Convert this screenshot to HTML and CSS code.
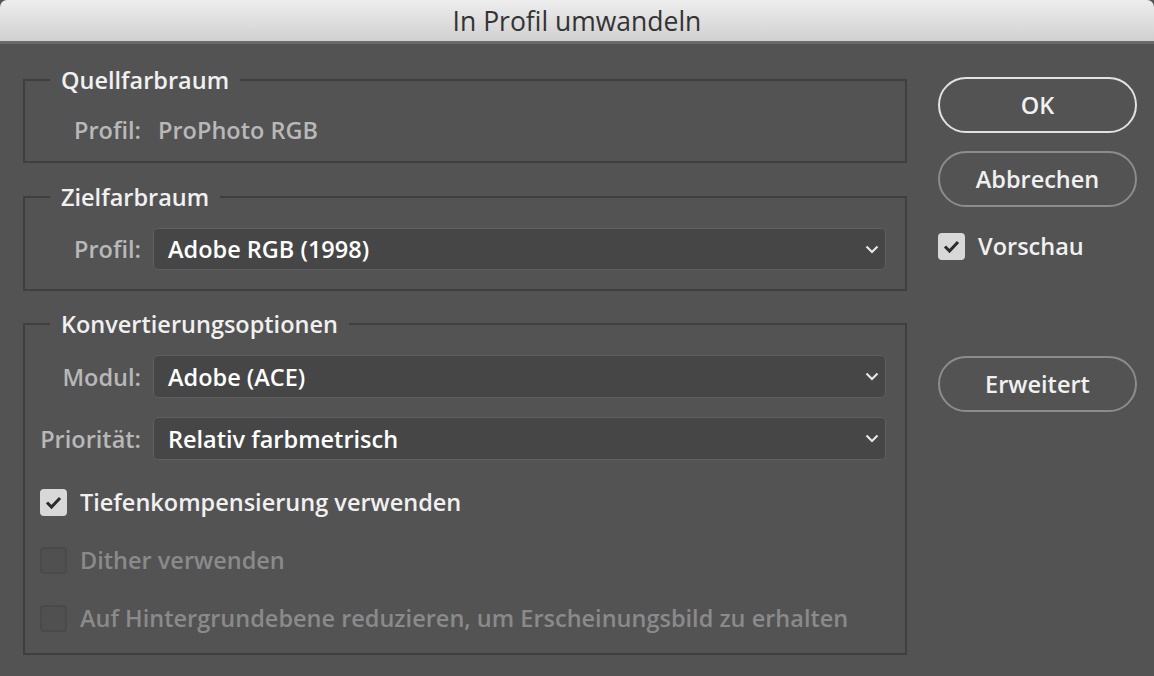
FILE: index.html
```html
<!DOCTYPE html>
<html lang="de">
<head>
  <meta charset="UTF-8" />
  <title>In Profil umwandeln</title>
  <link rel="stylesheet" href="styles.css">
</head>
<body>

  <div class="window">
    <div class="titlebar">In Profil umwandeln</div>

    <div class="content">
      <div class="left-col">

        <fieldset class="group group-source">
          <legend>Quellfarbraum</legend>
          <div class="row">
            <span class="label">Profil:</span>
            <span class="static-value">ProPhoto RGB</span>
          </div>
        </fieldset>

        <fieldset class="group group-target">
          <legend>Zielfarbraum</legend>
          <div class="row">
            <span class="label">Profil:</span>
            <div class="select">
              <span>Adobe RGB (1998)</span>
              <svg class="chevron" width="14" height="9" viewBox="0 0 14 9"><path d="M1.5 1.5 L7 7 L12.5 1.5" fill="none" stroke="#e6e6e6" stroke-width="2.2"/></svg>
            </div>
          </div>
        </fieldset>

        <fieldset class="group group-options">
          <legend>Konvertierungsoptionen</legend>
          <div class="row">
            <span class="label">Modul:</span>
            <div class="select">
              <span>Adobe (ACE)</span>
              <svg class="chevron" width="14" height="9" viewBox="0 0 14 9"><path d="M1.5 1.5 L7 7 L12.5 1.5" fill="none" stroke="#e6e6e6" stroke-width="2.2"/></svg>
            </div>
          </div>
          <div class="row row-gap">
            <span class="label">Priorität:</span>
            <div class="select">
              <span>Relativ farbmetrisch</span>
              <svg class="chevron" width="14" height="9" viewBox="0 0 14 9"><path d="M1.5 1.5 L7 7 L12.5 1.5" fill="none" stroke="#e6e6e6" stroke-width="2.2"/></svg>
            </div>
          </div>

          <div class="check first-check">
            <span class="box checked">
              <svg width="27" height="27" viewBox="0 0 27 27"><path d="M7 13.5 L11.5 18 L20 9" fill="none" stroke="#2b2b2b" stroke-width="3"/></svg>
            </span>
            <span class="check-label">Tiefenkompensierung verwenden</span>
          </div>
          <div class="check disabled">
            <span class="box"></span>
            <span class="check-label">Dither verwenden</span>
          </div>
          <div class="check disabled">
            <span class="box"></span>
            <span class="check-label">Auf Hintergrundebene reduzieren, um Erscheinungsbild zu erhalten</span>
          </div>
        </fieldset>

      </div>

      <div class="right-col">
        <button class="btn btn-default">OK</button>
        <button class="btn">Abbrechen</button>
        <div class="check preview-check">
          <span class="box checked">
            <svg width="27" height="27" viewBox="0 0 27 27"><path d="M7 13.5 L11.5 18 L20 9" fill="none" stroke="#2b2b2b" stroke-width="3"/></svg>
          </span>
          <span class="check-label">Vorschau</span>
        </div>
        <button class="btn btn-advanced">Erweitert</button>
      </div>
    </div>
  </div>

</body>
</html>
```

FILE: styles.css
```css
* {
  box-sizing: border-box;
  margin: 0;
  padding: 0;
}

html, body {
  background: #535353;
}

body {
  font-family: 'Open Sans', 'Noto Sans', sans-serif;
  font-weight: 600;
  width: 1154px;
  height: 676px;
  overflow: hidden;
}

.window {
  height: 676px;
}

.titlebar {
  height: 44px;
  background: linear-gradient(#eeeeee, #d0d0d0);
  border-bottom: 3px solid #6a6a6a;
  border-radius: 7px 7px 0 0;
  text-align: center;
  font-size: 26.5px;
  font-weight: 400;
  line-height: 42px;
  color: #333333;
}

.content {
  display: flex;
  padding: 24px 17px 0 23px;
}

.left-col {
  width: 884px;
}

.right-col {
  width: 199px;
  margin-left: 31px;
  padding-top: 9px;
  display: flex;
  flex-direction: column;
}

/* groups */
.group {
  border: 2px solid #3f3f3f;
  padding: 0 19px 0 15px;
  min-width: 0;
}

.group legend {
  margin-left: 10px;
  padding: 0 11px;
  font-size: 23.5px;
  line-height: 24px;
  color: #f0f0f0;
}

.group-source {
  padding-top: 22px;
  padding-bottom: 15px;
}

.group-target {
  margin-top: 22px;
  padding-top: 19px;
  padding-bottom: 19px;
}

.group-options {
  margin-top: 21px;
  padding-top: 19px;
  padding-bottom: 20px;
}

.row {
  display: flex;
  align-items: center;
  min-height: 30px;
}

.row-gap {
  margin-top: 19px;
}

.label {
  width: 101px;
  text-align: right;
  font-size: 23.5px;
  color: #b8b8b8;
  flex-shrink: 0;
}

.static-value {
  margin-left: 17px;
  font-size: 23.5px;
  color: #b8b8b8;
}

.select {
  flex: 1;
  margin-left: 12px;
  height: 43px;
  display: flex;
  align-items: center;
  justify-content: space-between;
  padding: 0 6px 0 14px;
  background: #464646;
  border: 1px solid #5f5f5f;
  border-radius: 5px;
  font-size: 23.5px;
  color: #ffffff;
}

.group-target .select {
  height: 42px;
}

/* checkboxes */
.check {
  display: flex;
  align-items: center;
  height: 30px;
  margin-top: 28px;
}

.first-check {
  margin-top: 27px;
}

.box {
  width: 27px;
  height: 27px;
  border-radius: 4px;
  flex-shrink: 0;
  border: 2px solid #4a4a4a;
  background: #505050;
}

.box.checked {
  border: none;
  background: #d8d8d8;
}

.box svg {
  display: block;
}

.check-label {
  margin-left: 13px;
  font-size: 23.5px;
  color: #f0f0f0;
}

.check.disabled .check-label {
  color: #8a8a8a;
}

.preview-check {
  margin-top: 24px;
}

/* buttons */
.btn {
  height: 56px;
  border-radius: 28px;
  border: 2px solid #8c8c8c;
  background: transparent;
  font-family: inherit;
  font-weight: 600;
  font-size: 23.5px;
  color: #f0f0f0;
  margin-top: 18px;
}

.btn-default {
  margin-top: 0;
  border-color: #e2e2e2;
}

.btn-advanced {
  margin-top: 95px;
}
```
